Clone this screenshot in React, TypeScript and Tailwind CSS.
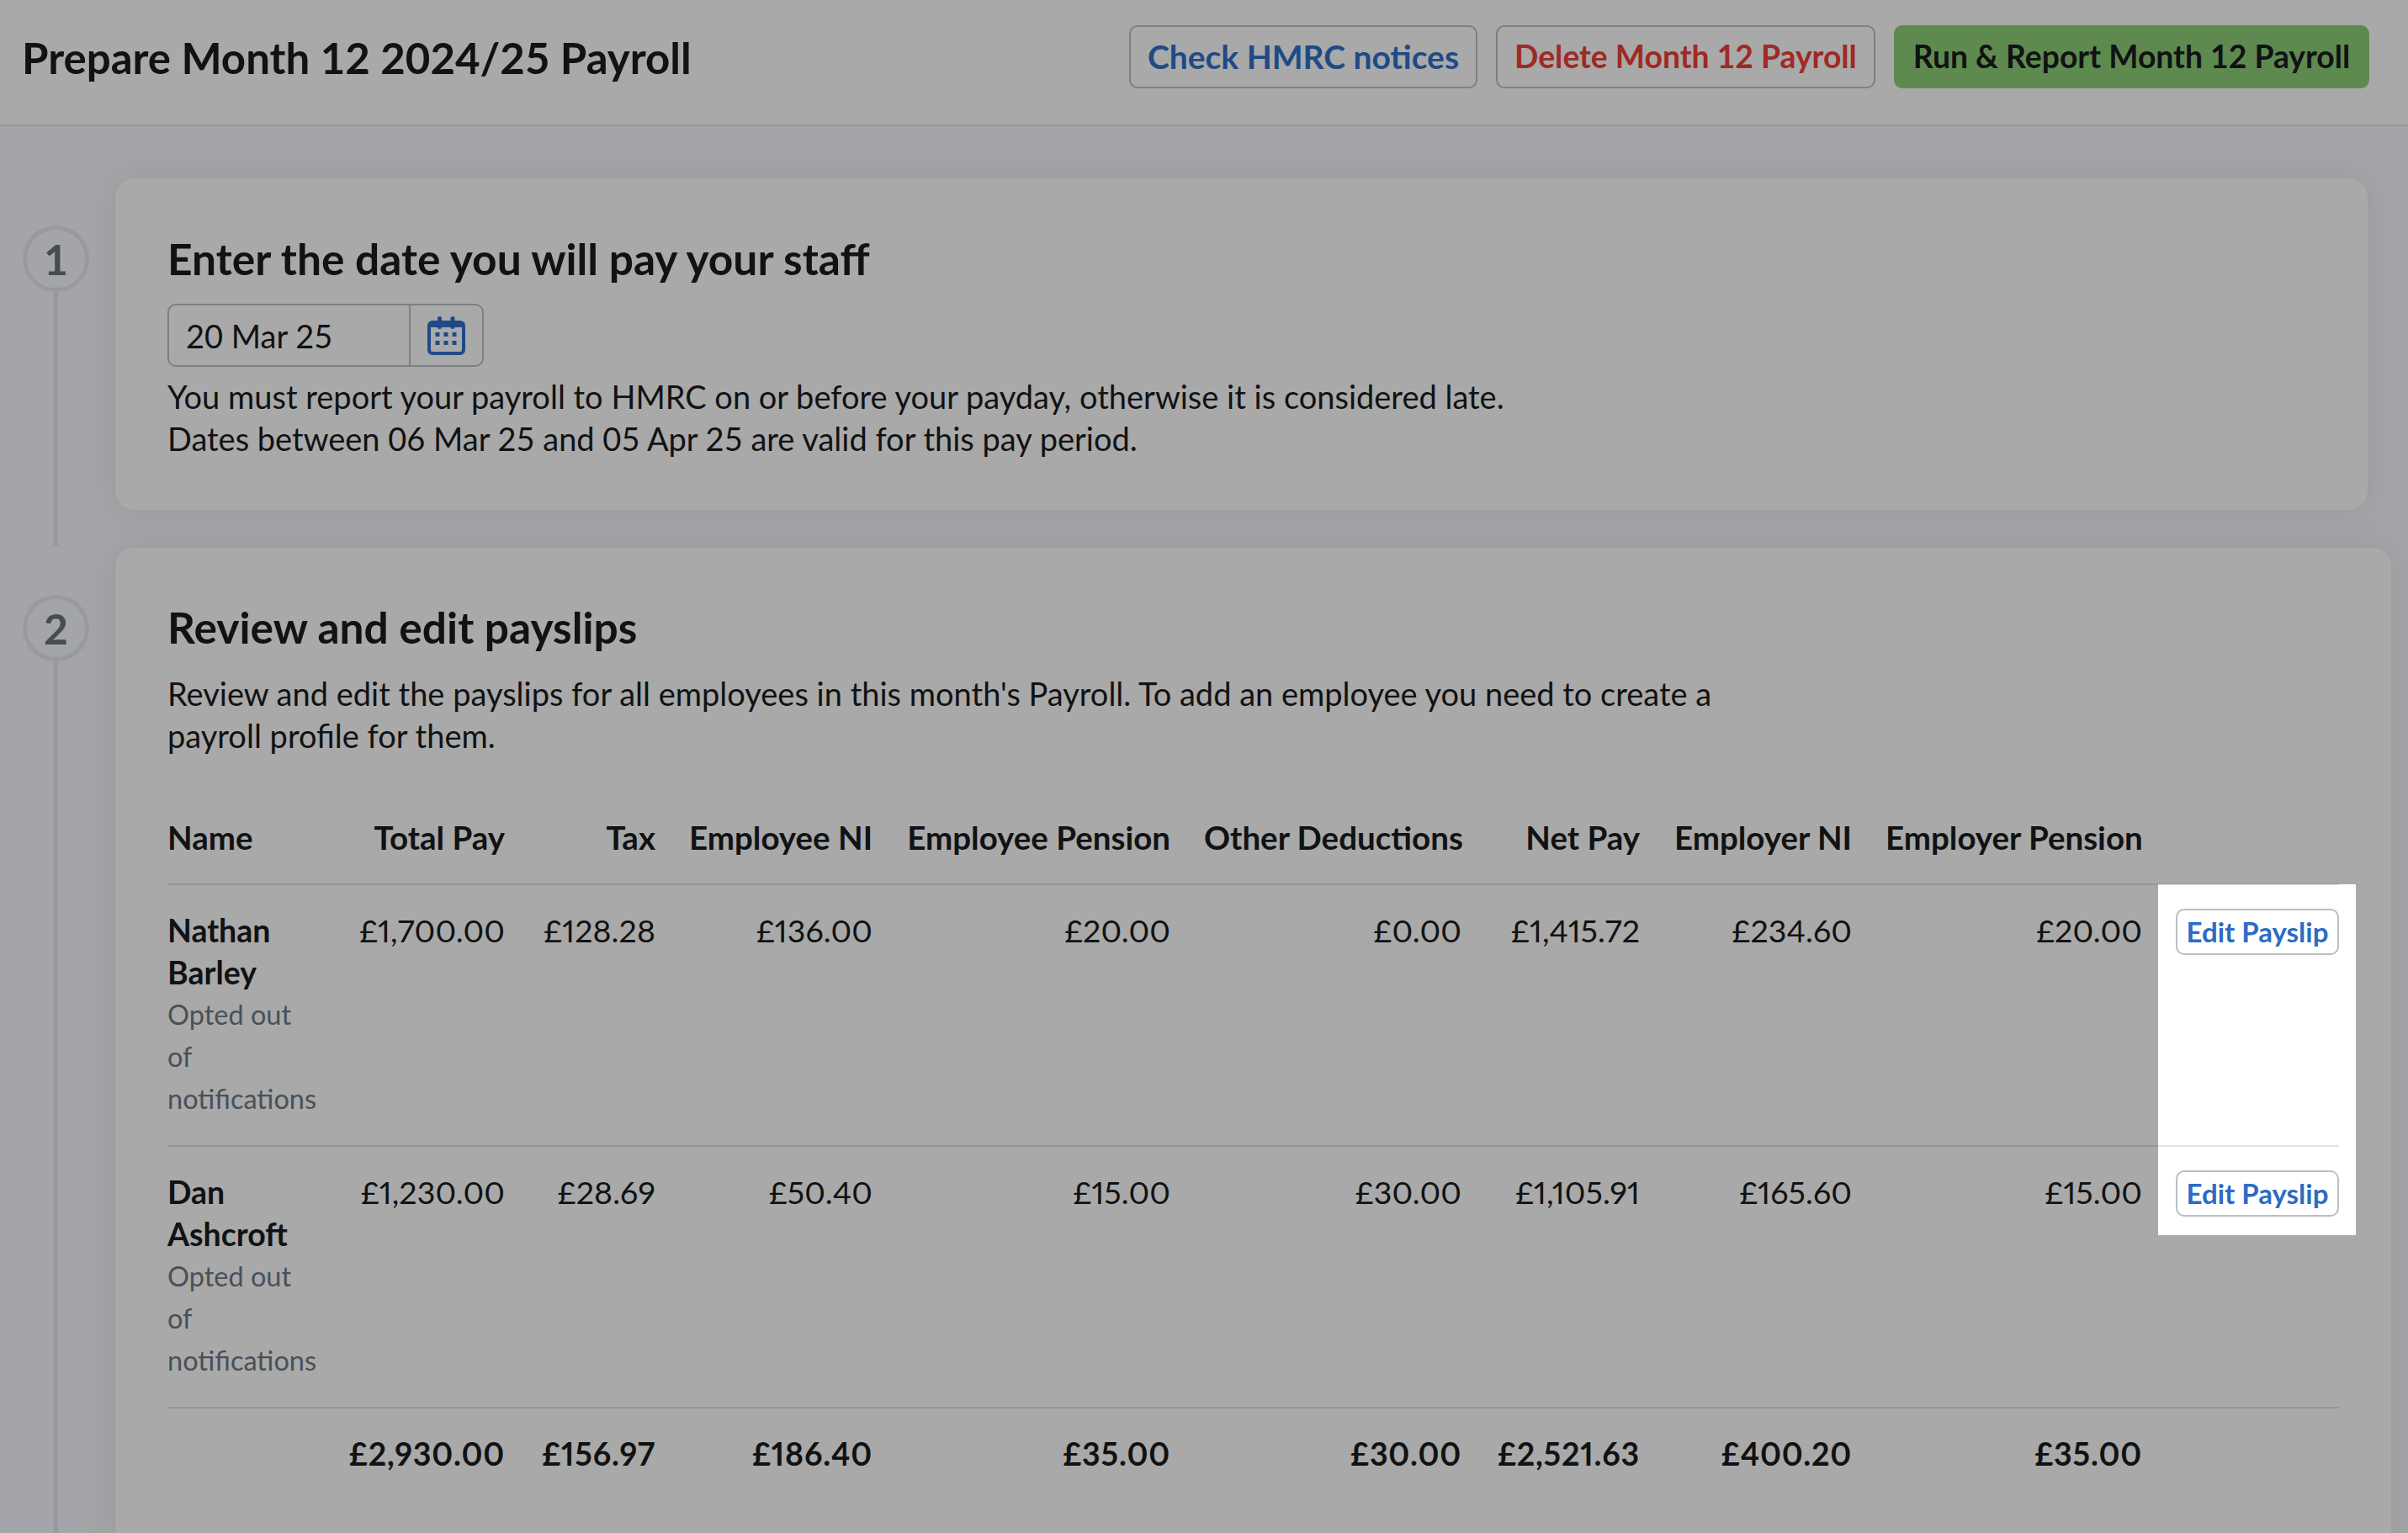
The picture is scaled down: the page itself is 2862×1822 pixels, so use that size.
import React from "react";

const rows = [
  { name: ["Nathan", "Barley"], vals: ["£1,700.00", "£128.28", "£136.00", "£20.00", "£0.00", "£1,415.72", "£234.60", "£20.00"] },
  { name: ["Dan", "Ashcroft"], vals: ["£1,230.00", "£28.69", "£50.40", "£15.00", "£30.00", "£1,105.91", "£165.60", "£15.00"] },
];
const heads = ["Total Pay", "Tax", "Employee NI", "Employee Pension", "Other Deductions", "Net Pay", "Employer NI", "Employer Pension"];
const totals = ["£2,930.00", "£156.97", "£186.40", "£35.00", "£30.00", "£2,521.63", "£400.20", "£35.00"];

function CalendarIcon() {
  return (
    <svg width="45" height="46" viewBox="0 0 45 46" fill="none">
      <rect x="2" y="7" width="41" height="37" rx="4" stroke="#2f70cb" strokeWidth="4" />
      <rect x="2" y="6" width="41" height="7" rx="3" fill="#2f70cb" />
      <rect x="12" y="0" width="5" height="15" rx="2.5" fill="#2f70cb" />
      <rect x="27.5" y="0" width="5" height="15" rx="2.5" fill="#2f70cb" />
      {[12, 22, 32].map((x) =>
        [21.5, 31.5].map((y) => <rect key={`${x}-${y}`} x={x - 2.5} y={y - 2.5} width="5" height="5" fill="#2f70cb" />)
      )}
    </svg>
  );
}

function StepMarker({ n }: { n: number }) {
  return (
    <div className="flex w-[135px] shrink-0 flex-col items-start pl-[27px] pt-[58px]">
      <div className="flex h-[79px] w-[79px] shrink-0 items-center justify-center rounded-full border-[5px] border-[#e6e9ee] text-[50px] font-bold leading-none text-[#68737f]">
        {n}
      </div>
      <div className="ml-[37px] w-[5px] flex-1 bg-[#e6e9ee]" />
    </div>
  );
}

export default function App() {
  return (
    <div className="relative h-[1822px] w-[2862px] overflow-hidden bg-[#f7f9fd] font-['Lato','Liberation_Sans',sans-serif] text-[38px] leading-[50px] text-[#1a1c1e]">
      <header className="flex h-[150px] items-center justify-between border-b-[2px] border-[#e6e9ee] bg-white pb-[14px] pl-[26px] pr-[46px]">
        <h1 className="pt-[3px] text-[51px] font-bold leading-[60px]">Prepare Month 12 2024/25 Payroll</h1>
        <div className="flex gap-[22px]">
          <button className="h-[75px] w-[414px] rounded-[10px] border-[2px] border-[#bcc2c9] bg-white text-[39px] font-bold text-[#2f70cb]">
            Check HMRC notices
          </button>
          <button className="h-[75px] w-[451px] rounded-[10px] border-[2px] border-[#bcc2c9] bg-white text-[37.3px] font-bold text-[#f03f37]">
            Delete Month 12 Payroll
          </button>
          <button className="h-[75px] w-[565px] rounded-[10px] bg-[#8fd079] text-[37.3px] font-bold text-[#1a1c1e]">
            Run &amp; Report Month 12 Payroll
          </button>
        </div>
      </header>

      <main className="pt-[60px]">
        <section className="flex">
          <StepMarker n={1} />
          <div className="mb-[41px] mr-[46px] h-[398px] flex-1 rounded-[24px] border-[2px] border-[#eef0f4] bg-white px-[62px] pt-[65px] shadow-[0_0_40px_rgba(70,85,105,0.1)]">
            <h2 className="text-[51.5px] font-bold leading-[60px]">Enter the date you will pay your staff</h2>
            <div className="mt-[24px] flex h-[75px] w-[376px] rounded-[10px] border-[2px] border-[#bcc2c9]">
              <div className="flex w-[287px] items-center border-r-[2px] border-[#bcc2c9] pl-[20px]">20 Mar 25</div>
              <div className="flex flex-1 items-center justify-center">
                <CalendarIcon />
              </div>
            </div>
            <p className="mt-[10px]">You must report your payroll to HMRC on or before your payday, otherwise it is considered late.</p>
            <p>Dates between 06 Mar 25 and 05 Apr 25 are valid for this pay period.</p>
          </div>
        </section>

        <section className="flex">
          <StepMarker n={2} />
          <div className="mr-[19px] flex-1 rounded-[24px] border-[2px] border-[#eef0f4] bg-white px-[62px] pb-[60px] pt-[64px] shadow-[0_0_40px_rgba(70,85,105,0.1)]">
            <h2 className="text-[51.5px] font-bold leading-[60px]">Review and edit payslips</h2>
            <p className="mt-[24px] w-[1900px]">
              Review and edit the payslips for all employees in this month's Payroll. To add an employee you need to create a payroll profile for them.
            </p>
            <table className="mt-[42px] w-[2581px] table-fixed text-[37.5px] proportional-nums">
              <colgroup>
                <col className="w-[195px]" />
                <col className="w-[226px]" />
                <col className="w-[179px]" />
                <col className="w-[258px]" />
                <col className="w-[354px]" />
                <col className="w-[346px]" />
                <col className="w-[212px]" />
                <col className="w-[252px]" />
                <col className="w-[345px]" />
                <col className="w-[214px]" />
              </colgroup>
              <thead>
                <tr>
                  <th className="pb-[30px] pt-[29px] text-left text-[38.5px] font-bold">Name</th>
                  {heads.map((h) => (
                    <th key={h} className="whitespace-nowrap px-[20px] pb-[30px] pt-[29px] text-right text-[38.5px] font-bold">
                      {h}
                    </th>
                  ))}
                  <th />
                </tr>
              </thead>
              <tbody>
                {rows.map((r) => (
                  <tr key={r.name[0]} className="border-t-[2px] border-[#e2e3e8] align-top">
                    <td className="pb-[30px] pt-[29px]">
                      <div className="font-bold">
                        {r.name[0]}
                        <br />
                        {r.name[1]}
                      </div>
                      <div className="text-[32.5px] text-[#6f7985]">
                        Opted out
                        <br />
                        of
                        <br />
                        notifications
                      </div>
                    </td>
                    {r.vals.map((v, i) => (
                      <td key={i} className="px-[20px] pb-[30px] pt-[29px] text-right tracking-[0.1px]">
                        {v}
                      </td>
                    ))}
                    <td className="pb-[30px] pl-[20px] pt-[28px]">
                      <button className="block h-[55px] w-[194px] rounded-[10px] border-[2px] border-[#b8bec6] bg-white text-[33px] font-bold leading-none text-[#2c6cc4]">
                        Edit Payslip
                      </button>
                    </td>
                  </tr>
                ))}
                <tr className="border-t-[2px] border-[#e2e3e8]">
                  <td className="py-[29px]" />
                  {totals.map((v, i) => (
                    <td key={i} className="px-[20px] py-[29px] text-right font-bold tracking-[0.8px]">
                      {v}
                    </td>
                  ))}
                  <td />
                </tr>
              </tbody>
            </table>
          </div>
        </section>
      </main>

      <div className="pointer-events-none absolute left-[2565px] top-[1051px] h-[417px] w-[235px] shadow-[0_0_0_4000px_rgba(0,0,0,0.337)]" />
    </div>
  );
}
